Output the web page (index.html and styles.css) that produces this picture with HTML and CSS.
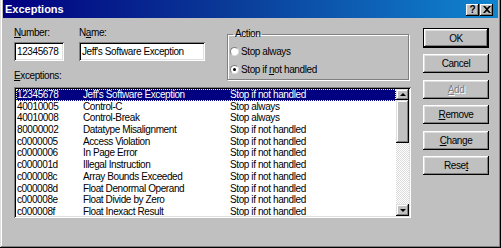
FILE: index.html
```html
<!DOCTYPE html>
<html>
<head>
<meta charset="utf-8">
<link rel="stylesheet" href="styles.css">
</head>
<body>
<div class="window">
  <div class="titlebar">
    <span class="title">Exceptions</span>
    <div class="tb-buttons">
      <span class="tb-btn help">?</span>
      <span class="tb-btn close"><svg width="8" height="7" viewBox="0 0 8 7"><path d="M0 0h2l2 2 2-2h2L5 3.5 8 7H6L4 5 2 7H0l3-3.5z" fill="#000"/></svg></span>
    </div>
  </div>
  <div class="content">
    <div class="main">
      <div class="top">
        <div class="topleft">
          <div class="fields">
            <div class="field num">
              <div class="lbl"><u>N</u>umber:</div>
              <div class="input">12345678</div>
            </div>
            <div class="field name">
              <div class="lbl">N<u>a</u>me:</div>
              <div class="input">Jeff's Software Exception</div>
            </div>
          </div>
          <div class="exlabel"><u>E</u>xceptions:</div>
        </div>
        <fieldset class="action">
          <legend>Action</legend>
          <div class="radio"><span class="dot"></span><span>Stop always</span></div>
          <div class="radio"><span class="dot checked"></span><span>Stop if <u>n</u>ot handled</span></div>
        </fieldset>
      </div>
      <div class="listbox">
        <div class="rows">
          <div class="row sel"><span>12345678</span><span>Jeff's Software Exception</span><span>Stop if not handled</span></div>
          <div class="row"><span>40010005</span><span>Control-C</span><span>Stop always</span></div>
          <div class="row"><span>40010008</span><span>Control-Break</span><span>Stop always</span></div>
          <div class="row"><span>80000002</span><span>Datatype Misalignment</span><span>Stop if not handled</span></div>
          <div class="row"><span>c0000005</span><span>Access Violation</span><span>Stop if not handled</span></div>
          <div class="row"><span>c0000006</span><span>In Page Error</span><span>Stop if not handled</span></div>
          <div class="row"><span>c000001d</span><span>Illegal Instruction</span><span>Stop if not handled</span></div>
          <div class="row"><span>c000008c</span><span>Array Bounds Exceeded</span><span>Stop if not handled</span></div>
          <div class="row"><span>c000008d</span><span>Float Denormal Operand</span><span>Stop if not handled</span></div>
          <div class="row"><span>c000008e</span><span>Float Divide by Zero</span><span>Stop if not handled</span></div>
          <div class="row"><span>c000008f</span><span>Float Inexact Result</span><span>Stop if not handled</span></div>
        </div>
        <div class="scrollbar">
          <div class="sb-btn up"><span class="tri-up"></span></div>
          <div class="thumb"></div>
          <div class="track"></div>
          <div class="sb-btn down"><span class="tri-down"></span></div>
        </div>
      </div>
    </div>
    <div class="buttons">
      <div class="btn default">OK</div>
      <div class="btn">Cancel</div>
      <div class="btn disabled"><u>A</u>dd</div>
      <div class="btn"><u>R</u>emove</div>
      <div class="btn"><u>C</u>hange</div>
      <div class="btn">Rese<u>t</u></div>
    </div>
  </div>
</div>
</body>
</html>
```
FILE: styles.css
```css
html, body {
  margin: 0;
  padding: 0;
  background: #c0c0c0;
}
body {
  font-family: "Liberation Sans", Arial, sans-serif;
  font-size: 10px;
  letter-spacing: -0.4px;
  color: #000;
}
u { text-decoration: underline; text-underline-offset: 1px; }

.window {
  width: 501px;
  height: 248px;
  box-sizing: border-box;
  padding: 0 3px 3px 3px;
  background: #c0c0c0;
  box-shadow: inset -1px -1px #000, inset 1px 0 #dfdfdf, inset -2px -2px #808080, inset 2px 0 #fff;
  display: flex;
  flex-direction: column;
}

.titlebar {
  height: 18px;
  flex: none;
  background: linear-gradient(to right, #000080 0%, #0a3a98 45%, #1084d0 100%);
  display: flex;
  align-items: center;
  justify-content: space-between;
  padding: 0 5px 0 2px;
}
.title {
  color: #fff;
  font-weight: bold;
  font-size: 11px;
  letter-spacing: 0;
}
.tb-buttons {
  display: flex;
  gap: 1px;
  margin-top: 1px;
}
.tb-btn {
  width: 13px;
  height: 12px;
  box-sizing: border-box;
  background: #c0c0c0;
  box-shadow: inset -1px -1px #000, inset 1px 1px #fff, inset -2px -2px #808080;
  display: flex;
  align-items: center;
  justify-content: center;
  font-weight: bold;
  font-size: 10px;
  letter-spacing: 0;
  line-height: 10px;
}

.content {
  display: flex;
  gap: 12px;
  padding: 9px 0 0 11px;
}
.main {
  width: 397px;
  display: flex;
  flex-direction: column;
}
.top {
  display: flex;
  justify-content: space-between;
}
.topleft {
  display: flex;
  flex-direction: column;
}
.fields {
  display: flex;
  gap: 15px;
}
.lbl {
  line-height: 12px;
  height: 15px;
}
.input {
  height: 19px;
  box-sizing: border-box;
  background: #fff;
  box-shadow: inset 1px 1px #808080, inset -1px -1px #fff, inset 2px 2px #000, inset -2px -2px #dfdfdf;
  padding: 0 3px;
  line-height: 19px;
  white-space: nowrap;
  overflow: hidden;
}
.num .input { width: 50px; }
.name .input { width: 126px; }
.exlabel {
  margin-top: 9px;
  line-height: 12px;
}

.action {
  width: 182px;
  height: 52px;
  box-sizing: border-box;
  margin: 1px 2px 0 0;
  padding: 2px 2px 0 2px;
  border: 1px solid #808080;
  box-shadow: inset 1px 1px #fff, 1px 1px #fff;
  min-width: 0;
}
.action legend {
  padding: 0 2px;
  margin-left: 3px;
  line-height: 12px;
}
.radio {
  height: 18px;
  display: flex;
  align-items: center;
  gap: 2px;
}
.dot {
  width: 9px;
  height: 9px;
  box-sizing: border-box;
  border-radius: 50%;
  background: #fff;
  border: 1px solid;
  border-color: #808080 #dfdfdf #dfdfdf #808080;
  position: relative;
}
.dot.checked::after {
  content: "";
  position: absolute;
  left: 2px;
  top: 2px;
  width: 3px;
  height: 3px;
  border-radius: 50%;
  background: #000;
}

.listbox {
  margin-top: 5px;
  width: 397px;
  height: 131px;
  box-sizing: border-box;
  padding: 2px;
  background: #fff;
  box-shadow: inset 1px 1px #808080, inset -1px -1px #fff, inset 2px 2px #000, inset -2px -2px #dfdfdf;
  display: flex;
}
.rows {
  flex: 1;
  overflow: hidden;
}
.row {
  display: grid;
  grid-template-columns: 66px 147px 1fr;
  height: 11.7px;
  line-height: 11.7px;
  padding-left: 1px;
  white-space: nowrap;
}
.row.sel {
  background: #000080;
  color: #fff;
  outline: 1px dotted #ffffa0;
  outline-offset: -1px;
}
.scrollbar {
  width: 13px;
  display: flex;
  flex-direction: column;
  background: repeating-conic-gradient(#dcdcdc 0 25%, #fff 0 50%) 0 0 / 2px 2px;
}
.sb-btn, .thumb {
  background: #c0c0c0;
  box-shadow: inset -1px -1px #000, inset 1px 1px #dfdfdf, inset -2px -2px #808080, inset 2px 2px #fff;
}
.sb-btn {
  display: flex;
  align-items: center;
  justify-content: center;
}
.sb-btn.up { height: 11px; }
.sb-btn.down { height: 12px; }
.thumb { height: 43px; }
.track { flex: 1; }
.tri-up {
  width: 0;
  height: 0;
  border-left: 3px solid transparent;
  border-right: 3px solid transparent;
  border-bottom: 3px solid #000;
}
.tri-down {
  width: 0;
  height: 0;
  border-left: 3px solid transparent;
  border-right: 3px solid transparent;
  border-top: 3px solid #000;
}

.buttons {
  width: 66px;
  display: flex;
  flex-direction: column;
  gap: 6.4px;
  padding-top: 1px;
}
.btn {
  height: 19px;
  box-sizing: border-box;
  background: #c0c0c0;
  box-shadow: inset -1px -1px #000, inset 1px 1px #fff, inset -2px -2px #808080, inset 2px 2px #dfdfdf;
  display: flex;
  align-items: center;
  justify-content: center;
}
.btn.default {
  height: 20px;
  box-shadow: inset 0 0 0 1px #000, inset -2px -2px #000, inset 2px 2px #fff, inset -3px -3px #808080, inset 3px 3px #dfdfdf;
}
.btn.disabled {
  color: #808080;
  text-shadow: 1px 1px #fff;
}
```
